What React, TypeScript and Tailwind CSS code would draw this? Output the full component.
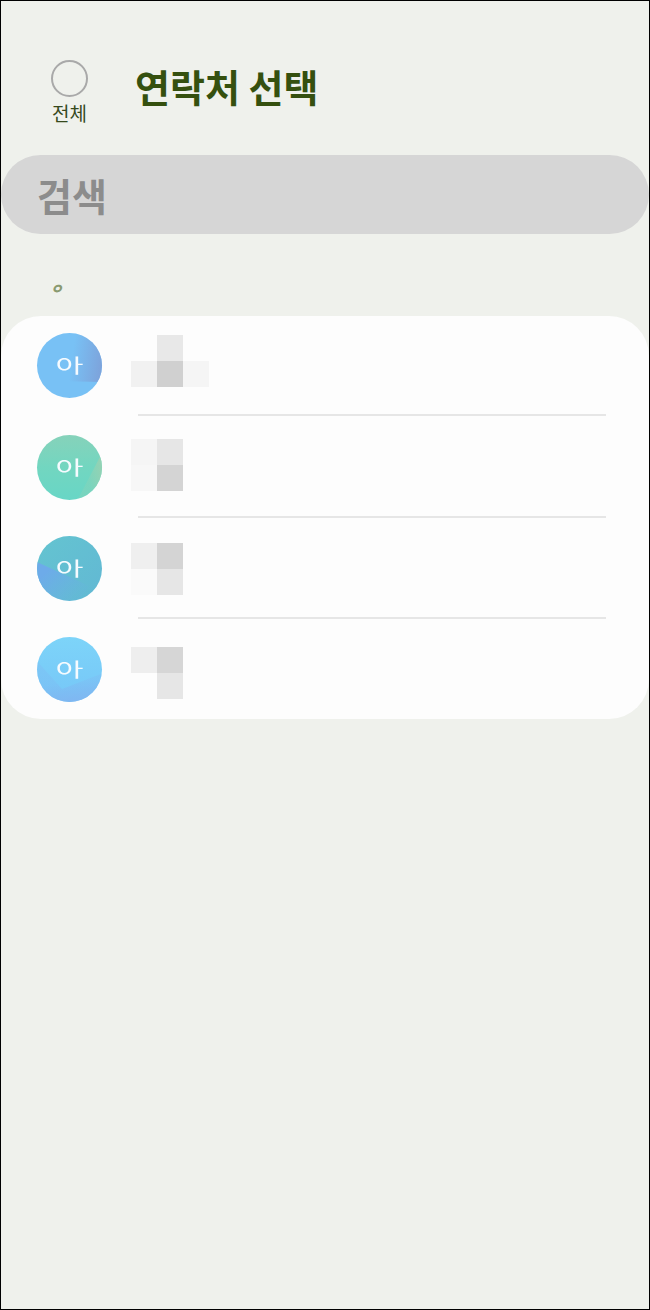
const fontStack = "font-['Noto_Sans_CJK_KR',sans-serif]";

type Stop = { at: string; color: string; opacity: number };

type Contact = {
  id: string;
  base: string;
  facet: string;
  line: [string, string, string, string];
  stops: Stop[];
  cells: string[];
  nameTop: string;
  gapBelow: string;
};

const contacts: Contact[] = [
  {
    id: "a",
    base: "bg-[#78c1f5]",
    facet: "M20 48 L65 49 L65 0 L40 0 Z",
    line: ["35%", "40%", "100%", "50%"],
    stops: [
      { at: "0", color: "#7da4dc", opacity: 0 },
      { at: "1", color: "#7da4dc", opacity: 1 },
    ],
    cells: ["bg-[#fdfdfd]", "bg-[#e8e8e8]", "bg-[#fdfdfd]", "bg-[#f1f1f1]", "bg-[#d0d0d0]", "bg-[#f5f5f5]"],
    nameTop: "mt-[2px]",
    gapBelow: "mt-[16px] mb-[19px]",
  },
  {
    id: "b",
    base: "bg-linear-to-b from-[#86d2ba] via-[#72d6c0] to-[#68d6c6]",
    facet: "M66 16 L40 66 L66 66 Z",
    line: ["50%", "70%", "100%", "50%"],
    stops: [
      { at: "0", color: "#93d2b4", opacity: 0.35 },
      { at: "1", color: "#93d2b4", opacity: 1 },
    ],
    cells: ["bg-[#f5f5f5]", "bg-[#e6e6e6]", "bg-[#fdfdfd]", "bg-[#f7f7f7]", "bg-[#d4d4d4]", "bg-[#fdfdfd]"],
    nameTop: "mt-[4px]",
    gapBelow: "mt-[16px] mb-[18px]",
  },
  {
    id: "c",
    base: "bg-linear-to-br from-[#64c4d0] to-[#62b8d4]",
    facet: "M0 26 L52 50 L40 66 L0 66 Z",
    line: ["5%", "40%", "70%", "90%"],
    stops: [
      { at: "0", color: "#6dabe9", opacity: 1 },
      { at: "1", color: "#6dabe9", opacity: 0.1 },
    ],
    cells: ["bg-[#efefef]", "bg-[#d4d4d4]", "bg-[#fdfdfd]", "bg-[#fafafa]", "bg-[#e6e6e6]", "bg-[#fdfdfd]"],
    nameTop: "mt-[7px]",
    gapBelow: "mt-[16px] mb-[18px]",
  },
  {
    id: "d",
    base: "bg-linear-to-b from-[#7dd4f9] to-[#76c6f7]",
    facet: "M0 24 L25 52 L66 36 L66 66 L0 66 Z",
    line: ["50%", "50%", "60%", "100%"],
    stops: [
      { at: "0", color: "#80b6f1", opacity: 0.3 },
      { at: "1", color: "#80b6f1", opacity: 1 },
    ],
    cells: ["bg-[#eeeeee]", "bg-[#d6d6d6]", "bg-[#fdfdfd]", "bg-[#fdfdfd]", "bg-[#e6e6e6]", "bg-[#fdfdfd]"],
    nameTop: "mt-[10px]",
    gapBelow: "",
  },
];

const ContactRow = ({ contact, last }: { contact: Contact; last: boolean }) => {
  const gradientId = `facet-${contact.id}`;
  return (
    <div className="flex flex-col">
      <div className="flex items-start gap-[29px] pl-[36px]">
        <div className={`relative size-[65px] shrink-0 overflow-hidden rounded-full ${contact.base}`}>
          <svg viewBox="0 0 65 65" className="absolute inset-0 size-full">
            <defs>
              <linearGradient id={gradientId} x1={contact.line[0]} y1={contact.line[1]} x2={contact.line[2]} y2={contact.line[3]}>
                {contact.stops.map((stop) => (
                  <stop key={stop.at} offset={stop.at} stopColor={stop.color} stopOpacity={stop.opacity} />
                ))}
              </linearGradient>
            </defs>
            <path d={contact.facet} fill={`url(#${gradientId})`} />
          </svg>
          <span className="absolute inset-0 flex scale-x-[1.6] items-center justify-center text-[19px] text-[#f6fbff]">
            아
          </span>
        </div>
        <div className={`grid grid-cols-[26px_26px_26px] grid-rows-[26px_26px] blur-[0.5px] ${contact.nameTop}`}>
          {contact.cells.map((cell, i) => (
            <div key={i} className={cell} />
          ))}
        </div>
      </div>
      {!last && <div className={`ml-[137px] mr-[43px] h-[2px] bg-[#e6e6e6] ${contact.gapBelow}`} />}
    </div>
  );
};

export default function App() {
  return (
    <div className={`box-border flex h-[1310px] w-[650px] flex-col border border-black bg-[#eff1ec] ${fontStack}`}>
      <div className="flex h-[154px] items-start pl-[50px] pt-[59px]">
        <div className="flex w-[37px] flex-col items-center">
          <div className="size-[37px] shrink-0 rounded-full border-2 border-[#a9a9a9]" />
          <span className="mt-[4px] whitespace-nowrap text-[19px] leading-[24px] text-[#36491c]">전체</span>
        </div>
        <h1 className="ml-[47px] mt-[1px] whitespace-nowrap text-[38px] leading-[50px] font-bold text-[#35500f]">
          연락처 선택
        </h1>
      </div>

      <div className="flex h-[79px] items-center rounded-[40px] bg-[#d6d6d6] pl-[36px]">
        <span className="text-[38px] leading-none font-bold text-[#8c8c8c]">검색</span>
      </div>

      <div className="flex h-[82px] items-center pl-[49px] pt-[26px]">
        <span className="text-[14px] leading-none font-black text-[#8a9a70] italic">ㅇ</span>
      </div>

      <div className="flex flex-col rounded-[40px] bg-[#fdfdfd] py-[17px]">
        {contacts.map((contact, i) => (
          <ContactRow key={contact.id} contact={contact} last={i === contacts.length - 1} />
        ))}
      </div>
    </div>
  );
}
